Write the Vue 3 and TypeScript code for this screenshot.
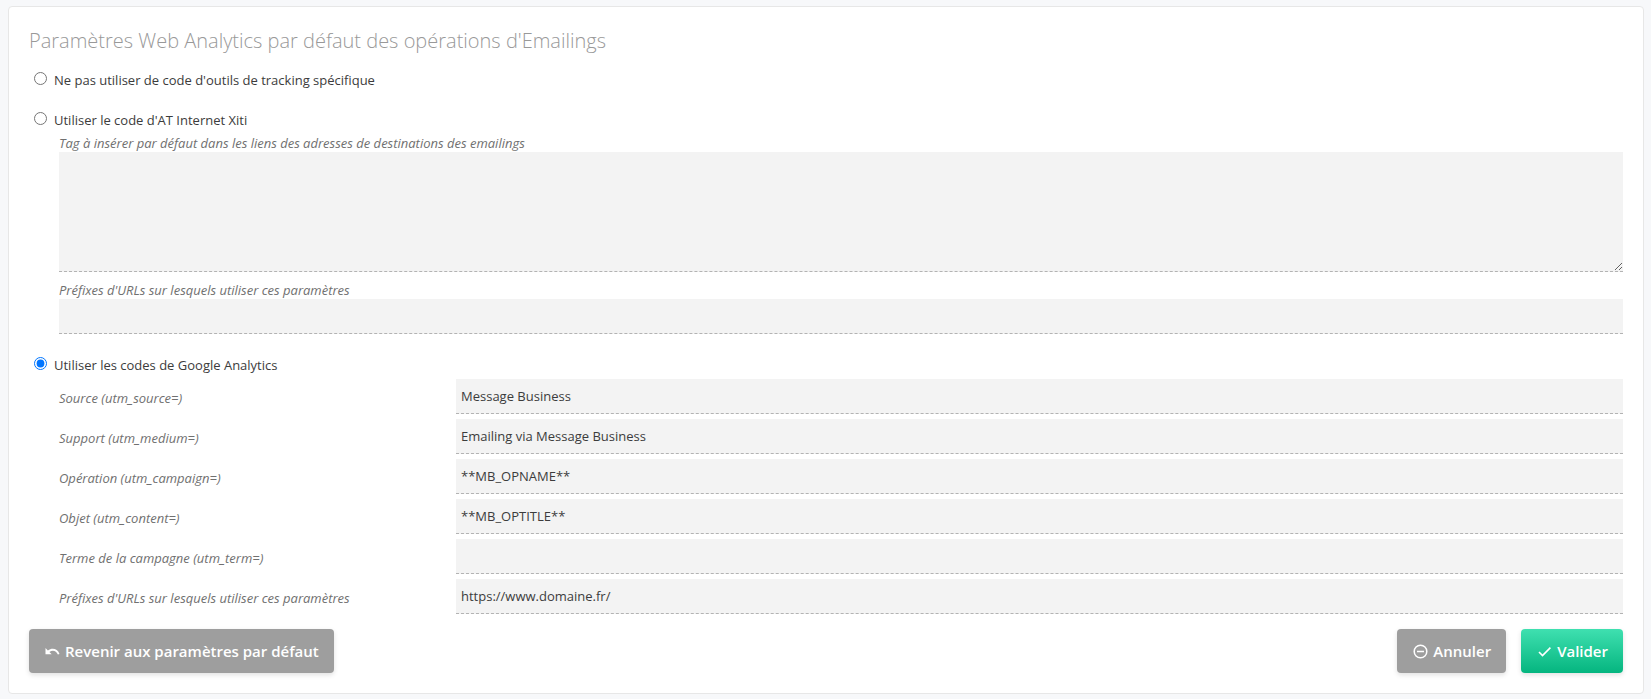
<script setup lang="ts">
import { ref } from 'vue'

type Mode = 'none' | 'xiti' | 'google'

interface Field {
  id: string
  label: string
  value: string
}

const mode = ref<Mode>('google')
const xitiTag = ref('')
const xitiPrefixes = ref('')
const fields = ref<Field[]>([
  { id: 'utm-source', label: 'Source (utm_source=)', value: 'Message Business' },
  { id: 'utm-medium', label: 'Support (utm_medium=)', value: 'Emailing via Message Business' },
  { id: 'utm-campaign', label: 'Opération (utm_campaign=)', value: '**MB_OPNAME**' },
  { id: 'utm-content', label: 'Objet (utm_content=)', value: '**MB_OPTITLE**' },
  { id: 'utm-term', label: 'Terme de la campagne (utm_term=)', value: '' },
  { id: 'utm-prefixes', label: "Préfixes d'URLs sur lesquels utiliser ces paramètres", value: 'https://www.domaine.fr/' },
])
</script>

<template>
  <form class="card" @submit.prevent>
    <h1 class="title">Paramètres Web Analytics par défaut des opérations d'Emailings</h1>

    <label class="choice">
      <input v-model="mode" type="radio" name="mode" value="none" />
      <span>Ne pas utiliser de code d'outils de tracking spécifique</span>
    </label>

    <section class="group">
      <label class="choice">
        <input v-model="mode" type="radio" name="mode" value="xiti" />
        <span>Utiliser le code d'AT Internet Xiti</span>
      </label>
      <div class="details">
        <label class="hint" for="xiti-tag">Tag à insérer par défaut dans les liens des adresses de destinations des emailings</label>
        <textarea id="xiti-tag" v-model="xitiTag" class="field area"></textarea>
        <label class="hint second" for="xiti-prefixes">Préfixes d'URLs sur lesquels utiliser ces paramètres</label>
        <input id="xiti-prefixes" v-model="xitiPrefixes" class="field" type="text" />
      </div>
    </section>

    <section class="group">
      <label class="choice">
        <input v-model="mode" type="radio" name="mode" value="google" />
        <span>Utiliser les codes de Google Analytics</span>
      </label>
      <div class="details rows">
        <div v-for="field in fields" :key="field.id" class="row">
          <label class="hint" :for="field.id">{{ field.label }}</label>
          <input :id="field.id" v-model="field.value" class="field" type="text" />
        </div>
      </div>
    </section>

    <footer class="actions">
      <button type="button" class="button reset">
        <svg class="icon" viewBox="0 0 15 15" aria-hidden="true">
          <path d="M0.5 4v6.200h6.200L4.400 7.900C7.500 5.700 11.300 6.500 12.900 10.500l1.600-.6C12.500 4.600 7.200 3.500 2.900 6.400z" fill="currentColor" />
        </svg>
        <span>Revenir aux paramètres par défaut</span>
      </button>
      <button type="button" class="button">
        <svg class="icon" viewBox="0 0 15 15" fill="none" stroke="currentColor" stroke-width="1.500" aria-hidden="true">
          <circle cx="7.500" cy="7.500" r="6.300" />
          <path d="M4 7.500h7" />
        </svg>
        <span>Annuler</span>
      </button>
      <button type="submit" class="button primary">
        <svg class="icon" viewBox="0 0 15 15" fill="none" stroke="currentColor" stroke-width="1.600" aria-hidden="true">
          <path d="M2 8l3.500 3.500L13.400 3.600" />
        </svg>
        <span>Valider</span>
      </button>
    </footer>
  </form>
</template>

<style>
body {
  background: #f7f8fa;
}
</style>

<style scoped>
.card {
  box-sizing: border-box;
  margin: 6px 7px 5px 8px;
  padding: 20px;
  border: 1px solid #e7e7e7;
  border-radius: 4px;
  background: #fff;
  color: #3c3c3c;
  font: 13px/18px "Open Sans", "Noto Sans", sans-serif;
}
.title {
  margin: 0 0 16px;
  color: #999;
  font-size: 20px;
  font-weight: 300;
  line-height: 28px;
}
.choice {
  display: flex;
  align-items: flex-start;
}
.choice input {
  flex: none;
  width: 13px;
  height: 13px;
  margin: 1px 7px 0 5px;
}
.group {
  margin-top: 22px;
}
.details {
  display: flex;
  flex-direction: column;
  margin: 5px 0 0 30px;
}
.hint {
  color: #707070;
  font-style: italic;
}
.second {
  margin-top: 9px;
}
.field {
  box-sizing: border-box;
  width: 100%;
  height: 35px;
  margin: 0;
  padding: 0 5px;
  border: 0;
  border-bottom: 1px dashed #b3b3b3;
  border-radius: 0;
  outline: 0;
  background: #f3f3f3;
  color: #3c3c3c;
  font: inherit;
}
.area {
  height: 120px;
  padding: 5px;
  resize: both;
}
.rows {
  gap: 5px;
}
.row {
  display: grid;
  grid-template-columns: 1fr 3fr;
  column-gap: 8px;
}
.row .hint {
  padding-top: 10px;
}
.actions {
  display: flex;
  gap: 15px;
  margin-top: 15px;
}
.button {
  display: flex;
  align-items: center;
  gap: 5px;
  height: 44px;
  padding: 0 15px 0 16px;
  border: 0;
  border-radius: 4px;
  background: #9e9e9e;
  box-shadow: 0 2px 5px rgba(0, 0, 0, 0.12);
  color: #fff;
  font: 600 15px/20px "Open Sans", "Noto Sans", sans-serif;
  cursor: pointer;
}
.reset {
  margin-right: auto;
}
.primary {
  background: linear-gradient(#3fe0b0, #05b57f);
}
.icon {
  width: 15px;
  height: 15px;
}
</style>
